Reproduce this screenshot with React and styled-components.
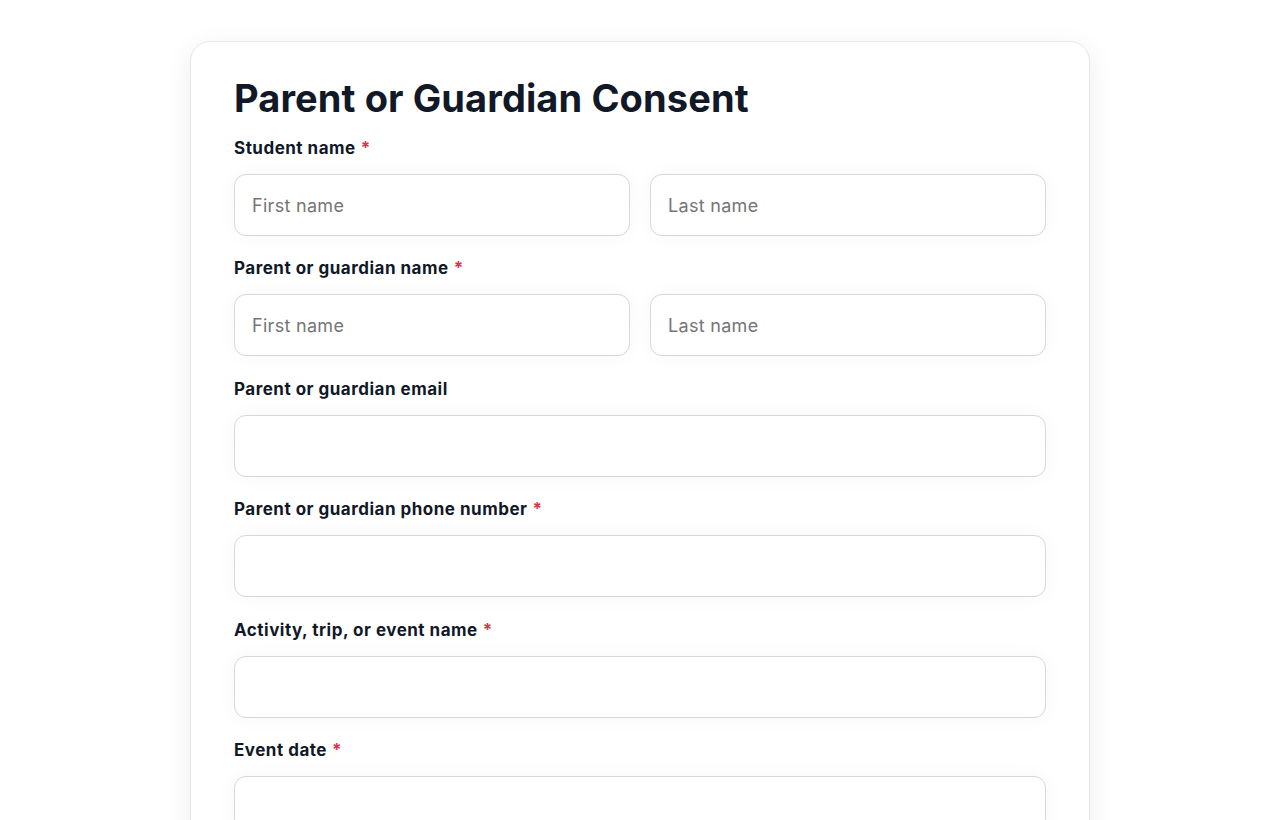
import React from 'react';
import styled, { createGlobalStyle } from 'styled-components';

const Global = createGlobalStyle`
  html, body {
    margin: 0;
    padding: 0;
    background: #ffffff;
  }
  body {
    font-family: Inter, "Noto Sans", sans-serif;
    color: #111827;
  }
  * { box-sizing: border-box; }
`;

const Page = styled.div`
  display: flex;
  justify-content: center;
  padding-top: 41px;
  height: 820px;
  overflow: hidden;
`;

const Card = styled.form`
  width: 900px;
  padding: 32px 43px 40px;
  background: #ffffff;
  border: 1px solid #e6e7eb;
  border-radius: 20px;
  box-shadow: 0 6px 28px rgba(17, 24, 39, 0.07);
  align-self: flex-start;
`;

const Title = styled.h1`
  margin: 0 0 14px;
  font-size: 38px;
  line-height: 48px;
  font-weight: 700;
  letter-spacing: 0.1px;
  color: #111827;
`;

const Field = styled.div`
  margin-bottom: 20.4px;
`;

const Label = styled.label`
  display: block;
  margin-bottom: 14px;
  font-size: 17px;
  line-height: 24px;
  font-weight: 700;
  letter-spacing: 0.5px;
  color: #111827;
`;

const Star = styled.span`
  color: #dc3449;
  margin-left: 5px;
`;

const Row = styled.div`
  display: grid;
  grid-template-columns: ${p => (p.split ? '1fr 1fr' : '1fr')};
  gap: 20px;
`;

const Input = styled.input`
  display: block;
  width: 100%;
  height: 62px;
  padding: 0 17px;
  border: 1px solid #d5d7dd;
  border-radius: 12px;
  background: #ffffff;
  font-family: inherit;
  font-size: 18px;
  letter-spacing: 0.3px;
  color: #111827;
  box-shadow: 0 0 22px rgba(17, 24, 39, 0.035);
  outline: none;

  ::placeholder {
    color: #9b9ea6;
  }
`;

const fields = [
  { label: 'Student name', required: true, split: true },
  { label: 'Parent or guardian name', required: true, split: true },
  { label: 'Parent or guardian email' },
  { label: 'Parent or guardian phone number', required: true },
  { label: 'Activity, trip, or event name', required: true },
  { label: 'Event date', required: true },
];

const App = () => (
  <Page>
    <Global />
    <Card onSubmit={e => e.preventDefault()}>
      <Title>Parent or Guardian Consent</Title>
      {fields.map(f => (
        <Field key={f.label}>
          <Label>
            {f.label}
            {f.required && <Star>*</Star>}
          </Label>
          <Row split={f.split}>
            {f.split ? (
              <>
                <Input placeholder="First name" />
                <Input placeholder="Last name" />
              </>
            ) : (
              <Input />
            )}
          </Row>
        </Field>
      ))}
    </Card>
  </Page>
);

export default App;
